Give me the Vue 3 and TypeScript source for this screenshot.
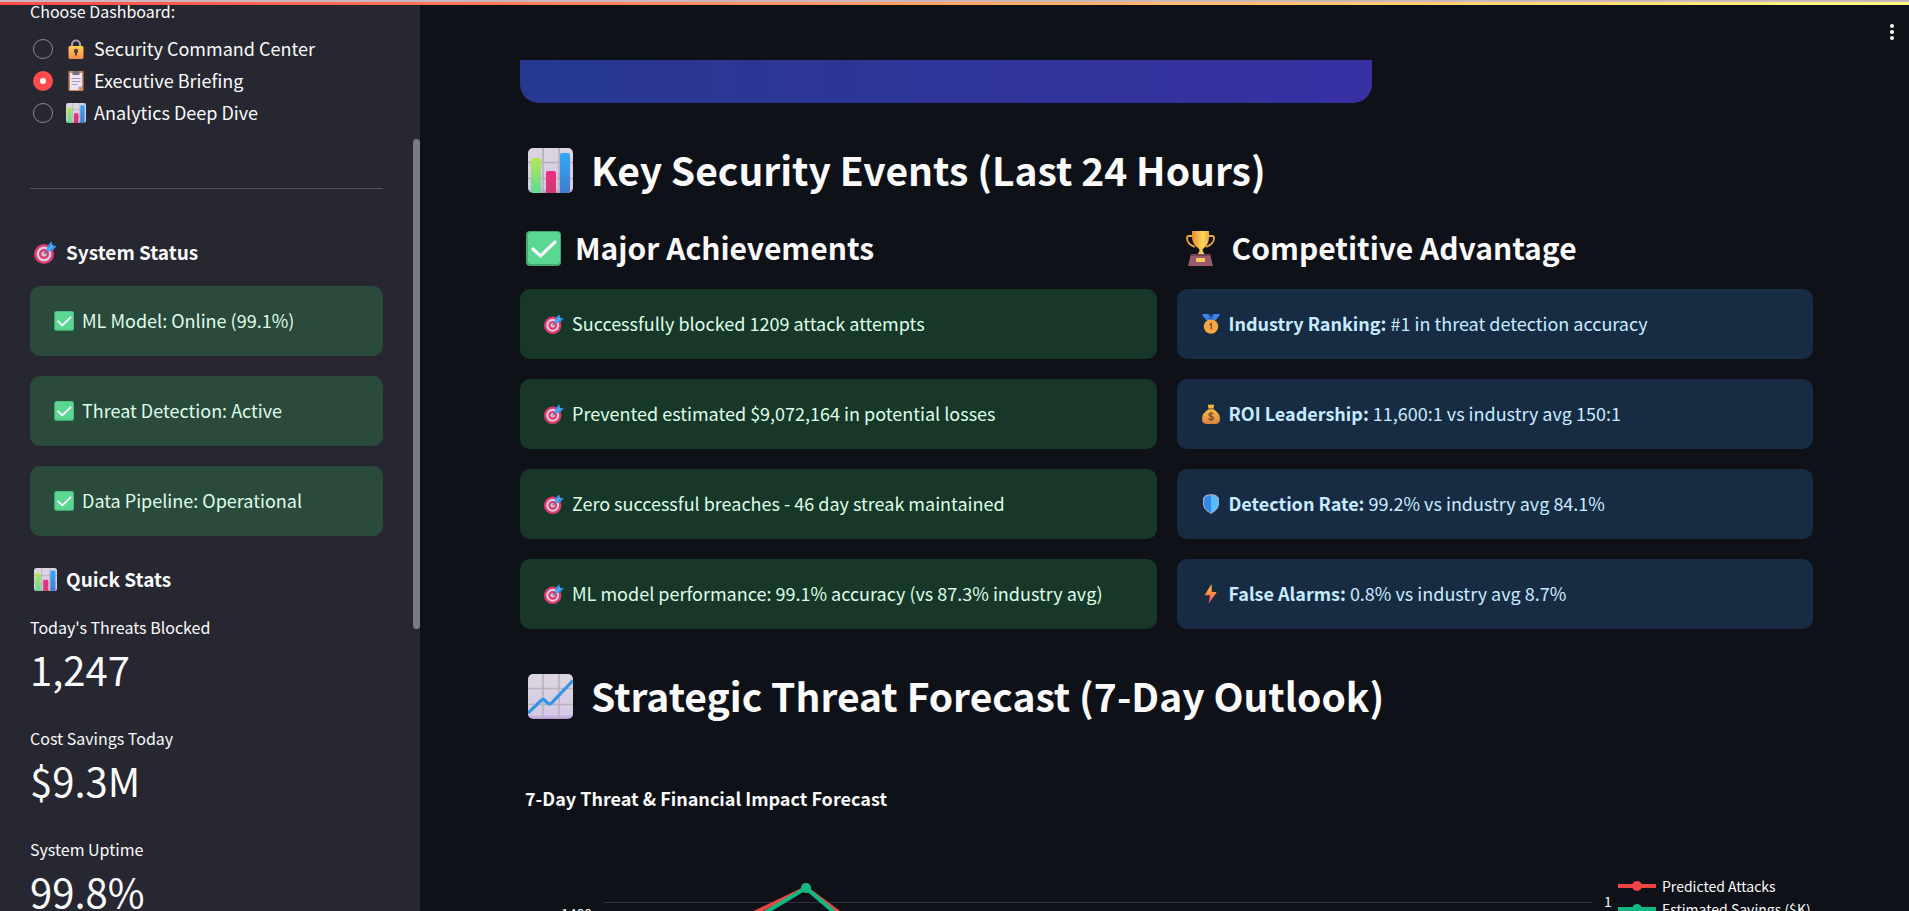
<script setup lang="ts">
import { ref } from 'vue'

interface Option { id: string; icon: string; label: string }
interface Advantage { icon: string; title: string; text: string }
interface Metric { label: string; value: string }
interface Series { name: string; color: string; points: [number, number][] }

const options: Option[] = [
  { id: 'security', icon: 'lock', label: 'Security Command Center' },
  { id: 'executive', icon: 'clipboard', label: 'Executive Briefing' },
  { id: 'analytics', icon: 'bars', label: 'Analytics Deep Dive' },
]
const selected = ref('executive')

const statuses: string[] = ['ML Model: Online (99.1%)', 'Threat Detection: Active', 'Data Pipeline: Operational']

const metrics: Metric[] = [
  { label: "Today's Threats Blocked", value: '1,247' },
  { label: 'Cost Savings Today', value: '$9.3M' },
  { label: 'System Uptime', value: '99.8%' },
]

const achievements: string[] = [
  'Successfully blocked 1209 attack attempts',
  'Prevented estimated $9,072,164 in potential losses',
  'Zero successful breaches - 46 day streak maintained',
  'ML model performance: 99.1% accuracy (vs 87.3% industry avg)',
]

const advantages: Advantage[] = [
  { icon: 'medal', title: 'Industry Ranking:', text: '#1 in threat detection accuracy' },
  { icon: 'moneybag', title: 'ROI Leadership:', text: '11,600:1 vs industry avg 150:1' },
  { icon: 'shield', title: 'Detection Rate:', text: '99.2% vs industry avg 84.1%' },
  { icon: 'bolt', title: 'False Alarms:', text: '0.8% vs industry avg 8.7%' },
]

const series: Series[] = [
  { name: 'Predicted Attacks', color: '#ef4444', points: [[56, 87], [202, 17], [347, 125]] },
  { name: 'Estimated Savings ($K)', color: '#10b981', points: [[56, 105], [202, 17], [347, 141]] },
]
const path = (s: Series): string => s.points.map((p) => p.join(',')).join(' ')
</script>

<template>
  <div class="app">
    <svg class="sprite" width="0" height="0" aria-hidden="true">
      <defs>
        <linearGradient id="g-paper" x1="0" y1="0" x2="0" y2="1"><stop offset="0" stop-color="#dcd6e0" /><stop offset=".9" stop-color="#d6c9e6" /><stop offset="1" stop-color="#b497cf" /></linearGradient>
        <linearGradient id="g-lime" x1="0" y1="0" x2="0" y2="1"><stop offset="0" stop-color="#b5e654" /><stop offset="1" stop-color="#5edb93" /></linearGradient>
        <linearGradient id="g-pink" x1="0" y1="0" x2="0" y2="1"><stop offset="0" stop-color="#ef2f86" /><stop offset="1" stop-color="#cf3a70" /></linearGradient>
        <linearGradient id="g-blue" x1="0" y1="0" x2="0" y2="1"><stop offset="0" stop-color="#34aaf8" /><stop offset="1" stop-color="#407bd0" /></linearGradient>
        <linearGradient id="g-lock" x1="0" y1="0" x2="0" y2="1"><stop offset="0" stop-color="#ffd055" /><stop offset="1" stop-color="#fb8a49" /></linearGradient>
        <linearGradient id="g-gold" x1="0" y1="0" x2="1" y2="0"><stop offset="0" stop-color="#e88a33" /><stop offset=".65" stop-color="#fbd95a" /><stop offset="1" stop-color="#f0a83c" /></linearGradient>
        <linearGradient id="g-bag" x1="0" y1="0" x2="0" y2="1"><stop offset="0" stop-color="#f6bd45" /><stop offset="1" stop-color="#dc8340" /></linearGradient>
        <linearGradient id="g-bolt" x1="0" y1="0" x2="0" y2="1"><stop offset="0" stop-color="#ffc24c" /><stop offset=".5" stop-color="#ff8a48" /><stop offset="1" stop-color="#f2355d" /></linearGradient>
      </defs>
      <symbol id="i-bars" viewBox="0 0 45 45">
        <rect width="45" height="45" rx="5" fill="url(#g-paper)" />
        <path d="M15 0v45M31 0v45M0 14.500h45M0 30.500h45" stroke="#b5aebb" stroke-width="1.600" />
        <path d="M3 12q0-2 2-2h6q2 0 2 2v33H5q-2-1-2-3z" fill="url(#g-lime)" />
        <path d="M18 25q0-2 2-2h6q2 0 2 2v20H18z" fill="url(#g-pink)" />
        <path d="M32 7q0-2 2-2h6q2 0 2 2v36l-2 2h-8z" fill="url(#g-blue)" />
      </symbol>
      <symbol id="i-trend" viewBox="0 0 45 45">
        <rect width="45" height="45" rx="5" fill="url(#g-paper)" />
        <path d="M15 0v45M31 0v45M0 14.500h45M0 30.500h45" stroke="#b9b2bf" stroke-width="1.600" />
        <path d="M0 39 13.500 26q1.500-1 3 0l3.500 3.500q1.500 1 3 0L45 6.500" fill="none" stroke="#3494df" stroke-width="3.200" />
      </symbol>
      <symbol id="i-check" viewBox="0 0 35 35">
        <rect width="35" height="35" rx="4" fill="#43a871" />
        <rect x="2" y="1" width="32" height="32" rx="3" fill="#5ad892" />
        <path d="m7 18 7.500 7L29 11" fill="none" stroke="#fbf4ff" stroke-width="3.200" stroke-linecap="round" stroke-linejoin="round" />
      </symbol>
      <symbol id="i-target" viewBox="0 0 23 23">
        <circle cx="10" cy="13" r="10" fill="#df3a6e" />
        <circle cx="10" cy="13" r="7.400" fill="#dccbe2" />
        <circle cx="10" cy="13" r="5" fill="#df3a6e" />
        <circle cx="10" cy="13" r="2.600" fill="#d9c3da" />
        <path d="m10.500 12.500 6-6" stroke="#58637d" stroke-width="1.500" stroke-linecap="round" />
        <path d="m12.500 9.500 1-4.500L17.500.300l1 4 4.200 1-4.200 4-4 1.200z" fill="#3499ec" />
        <path d="m13.500 9.500 5-5" stroke="#7cc8ff" stroke-width="1" />
      </symbol>
      <symbol id="i-lock" viewBox="0 0 20 20">
        <path d="M6 8V5.500a4 4 0 0 1 8 0V8" fill="none" stroke="#a29da8" stroke-width="2.200" />
        <rect x="2.500" y="7" width="15" height="13" rx="1.500" fill="url(#g-lock)" />
        <circle cx="10" cy="12" r="2.200" fill="#543f3c" />
        <path d="M9 12h2v4.500H9z" fill="#543f3c" />
      </symbol>
      <symbol id="i-clipboard" viewBox="0 0 20 20">
        <rect x="2.500" width="15" height="20" rx="1.200" fill="#cf8a5e" />
        <path d="M4 2h12v13l-4 4H4z" fill="#eee4f5" />
        <path d="m12 19 .5-3.500L16 15z" fill="#bda8cf" />
        <path d="M6.500 1q.5-1 1.500-1h4q1 0 1.500 1v3h-7z" fill="#77707f" />
        <path d="M5.500 7.500h9M5.500 10.500h9M5.500 13.500h6" stroke="#a99bb3" stroke-width="1" />
      </symbol>
      <symbol id="i-trophy" viewBox="0 0 35 35">
        <path d="M9 5H6Q4 5 4 7q0 6 8 9M26 5h3q2 0 2 2 0 6-8 9" fill="none" stroke="#f0a840" stroke-width="1.800" />
        <path d="M9 0h17v6q0 7-4.500 10.500-2.500 1.500-2 3.500l2.500 4h-8l2.500-4q.5-2-2-3.500Q9 13 9 6z" fill="url(#g-gold)" />
        <path d="M8 23h19l3 12H5z" fill="#9b596c" />
        <path d="M8 23h19l1 2H7.500z" fill="#704352" />
        <rect x="13" y="27" width="9" height="4" rx=".8" fill="#f8c85a" />
      </symbol>
      <symbol id="i-medal" viewBox="0 0 20 20">
        <path d="M1.500 0h6L10 2.500 12.500 0h6v1.500l-5 6h-7l-5-6z" fill="#3d83eb" />
        <path d="M7.500 0 10 2.500 12.500 0l-1 7h-3z" fill="#2868bd" />
        <circle cx="10" cy="12.600" r="7.200" fill="#f5a63f" />
        <path d="m8.600 10.800 1.700-1.200v6" fill="none" stroke="#7c4a32" stroke-width="1.300" />
      </symbol>
      <symbol id="i-moneybag" viewBox="0 0 20 20">
        <path d="M7 .500 9 1l1-1 1 1 2-.500v2L12.200 5H7.800L7 2.500z" fill="#efb344" />
        <path d="M8 5h4q7 4 7 10 0 5-5 5H6q-5 0-5-5Q1 9 8 5z" fill="url(#g-bag)" />
        <path d="M7.700 4.800h4.600" stroke="#8f5534" stroke-width="1.200" />
        <path d="M12.300 10.200q-.8-1.200-2.300-1.200-2.200 0-2.200 1.600 0 1.500 2.200 1.700 2.300.3 2.300 1.900T10 15.800q-1.700 0-2.500-1.300M10 7.800v9.200" fill="none" stroke="#784b32" stroke-width="1.200" />
      </symbol>
      <symbol id="i-shield" viewBox="0 0 20 20">
        <path d="M10 0 15 1l3 3v7q-1 5-8 9-7-4-8-9V4l3-3z" fill="#a8a9c6" />
        <path d="M10 1.200 6 2 3 4.500V11q1 4.500 7 7.900z" fill="#3388e8" />
        <path d="m10 1.200 4 .8 3 2.500V11q-1 4.500-7 7.900z" fill="#55bdfb" />
      </symbol>
      <symbol id="i-bolt" viewBox="0 0 20 20">
        <path d="M10.500 0 4 10.500q-.3.800.5.800H9L7.500 20l7.800-11q.4-.9-.5-.9h-4z" fill="url(#g-bolt)" />
      </symbol>
    </svg>

    <div class="decoration"></div>

    <aside class="sidebar">
      <fieldset class="picker">
        <legend>Choose Dashboard:</legend>
        <label v-for="o in options" :key="o.id" class="option">
          <input v-model="selected" type="radio" name="dashboard" :value="o.id" />
          <svg class="ico"><use :href="'#i-' + o.icon" /></svg>
          <span class="text">{{ o.label }}</span>
        </label>
      </fieldset>
      <hr />
      <h3 class="side-title"><svg class="ico-side"><use href="#i-target" /></svg>System Status</h3>
      <div class="stack">
        <div v-for="s in statuses" :key="s" class="card ok"><svg class="ico"><use href="#i-check" /></svg><span class="text">{{ s }}</span></div>
      </div>
      <h3 class="side-title stats-title"><svg class="ico-side"><use href="#i-bars" /></svg>Quick Stats</h3>
      <dl class="metrics">
        <div v-for="m in metrics" :key="m.label" class="metric">
          <dt>{{ m.label }}</dt>
          <dd>{{ m.value }}</dd>
        </div>
      </dl>
      <div class="thumb"></div>
    </aside>

    <main class="main">
      <button class="menu" type="button" aria-label="Main menu">
        <svg width="24" height="24" viewBox="0 0 24 24" fill="#fafafa"><circle cx="12" cy="6" r="2" /><circle cx="12" cy="12" r="2" /><circle cx="12" cy="18" r="2" /></svg>
      </button>
      <div class="hero-row"><div class="hero"></div></div>

      <h2><svg class="ico-h2"><use href="#i-bars" /></svg><span>Key Security Events (Last 24 Hours)</span></h2>
      <div class="columns">
        <section>
          <h3><svg class="ico-h3"><use href="#i-check" /></svg><span>Major Achievements</span></h3>
          <div class="stack">
            <div v-for="a in achievements" :key="a" class="card ok"><svg class="ico"><use href="#i-target" /></svg><span class="text">{{ a }}</span></div>
          </div>
        </section>
        <section>
          <h3><svg class="ico-h3"><use href="#i-trophy" /></svg><span>Competitive Advantage</span></h3>
          <div class="stack">
            <div v-for="a in advantages" :key="a.title" class="card info"><svg class="ico"><use :href="'#i-' + a.icon" /></svg><span class="text"><strong>{{ a.title }}</strong> {{ a.text }}</span></div>
          </div>
        </section>
      </div>

      <h2><svg class="ico-h2"><use href="#i-trend" /></svg><span>Strategic Threat Forecast (7-Day Outlook)</span></h2>
      <h4>7-Day Threat &amp; Financial Impact Forecast</h4>
      <div class="chart">
        <div class="tick left">1400</div>
        <svg class="plot" viewBox="0 0 988 400">
          <path d="M0 31.500h988" stroke="#31343e" stroke-width="1" />
          <g v-for="s in series" :key="s.name">
            <polyline :points="path(s)" fill="none" :stroke="s.color" stroke-width="4" />
            <circle v-for="p in s.points" :key="p[0]" :cx="p[0]" :cy="p[1]" r="5" :fill="s.color" />
          </g>
        </svg>
        <div class="tick right">1</div>
        <ul class="legend">
          <li v-for="s in series" :key="s.name">
            <svg width="38" height="12" viewBox="0 0 38 12"><path d="M0 6h38" :stroke="s.color" stroke-width="4" /><circle cx="19" cy="6" r="5" :fill="s.color" /></svg>
            <span>{{ s.name }}</span>
          </li>
        </ul>
      </div>
    </main>
  </div>
</template>

<style>
body {
  margin: 0;
  overflow: hidden;
  background: #0e1117;
}
</style>

<style scoped>
.app {
  display: flex;
  height: 100vh;
  overflow: hidden;
  background: #0e1117;
  color: #fafafa;
  font-family: "Noto Sans CJK SC", "Noto Sans", sans-serif;
  font-size: 18px;
  line-height: 28px;
}
.sprite {
  position: absolute;
}
.decoration {
  position: absolute;
  z-index: 2;
  top: 0;
  left: 0;
  right: 0;
  height: 3px;
  border-top: 2px solid #cbb6be;
  background: linear-gradient(90deg, #ff4b4b, #fffd80);
}
svg {
  flex: none;
}
.text {
  padding-bottom: 2px;
}
.ico {
  width: 20px;
  height: 20px;
}
h2, h3, h4 {
  display: flex;
  align-items: center;
  margin: 0;
  font-weight: 600;
}

.sidebar {
  position: relative;
  flex: none;
  box-sizing: border-box;
  width: 420px;
  padding: 0 37px 0 30px;
  overflow: hidden;
  background: #262730;
}
.picker {
  margin: 0;
  padding: 0;
  border: 0;
}
legend {
  padding: 0 0 11px;
  font-size: 16px;
  line-height: 22px;
}
.option {
  display: flex;
  align-items: center;
  height: 32px;
  padding-left: 3px;
}
.option .ico {
  margin: 0 8px 0 13px;
}
.option input {
  appearance: none;
  box-sizing: border-box;
  width: 20px;
  height: 20px;
  margin: 0;
  border: 1px solid #898a90;
  border-radius: 50%;
}
.option input:checked {
  border: 7px solid #ff4b4b;
  background: #fff;
}
hr {
  height: 1px;
  margin: 59px 0 49px;
  border: 0;
  background: #50515a;
}
.side-title {
  gap: 9px;
  padding-left: 4px;
  margin-bottom: 20px;
  font-size: 19px;
  line-height: 28px;
}
.ico-side {
  width: 23px;
  height: 23px;
}
.stats-title {
  margin: 29px 0 23px;
}
.metrics {
  display: grid;
  gap: 23px;
  margin: 0;
}
dt {
  padding-bottom: 2px;
  font-size: 16px;
  line-height: 22px;
}
dd {
  margin: 0;
  padding-bottom: 6px;
  font-size: 40px;
  line-height: 58px;
}
.thumb {
  position: absolute;
  top: 139px;
  right: 0;
  width: 7px;
  height: 490px;
  border-radius: 4px;
  background: #7d7b81;
}

.stack {
  display: grid;
  gap: 20px;
}
.card {
  display: flex;
  align-items: center;
  gap: 8px;
  padding: 20px 20px 20px 24px;
  border-radius: 10px;
}
.ok {
  background: rgba(61, 213, 109, 0.2);
  color: #dffde9;
}
.info {
  background: rgba(61, 157, 243, 0.2);
  color: #c7ebff;
}

.main {
  position: relative;
  flex: 1;
  min-width: 0;
  padding: 60px 96px 0 100px;
  overflow: hidden;
}
.menu {
  position: absolute;
  top: 20px;
  right: 5px;
  display: flex;
  padding: 0;
  border: 0;
  background: none;
}
.hero-row {
  display: grid;
  grid-template-columns: 2fr 1fr;
  gap: 15px;
}
.hero {
  height: 43px;
  border-radius: 0 0 19px 19px;
  background: linear-gradient(90deg, #26398f, #3730a3);
}
h2 {
  gap: 18px;
  margin-top: 40px;
  padding-left: 8px;
  font-size: 39px;
  line-height: 52px;
}
h2 span {
  padding-bottom: 2px;
}
.ico-h2 {
  width: 45px;
  height: 45px;
}
.columns {
  display: grid;
  grid-template-columns: 1fr 1fr;
  gap: 20px;
  margin-top: 30px;
}
.columns h3 {
  gap: 14px;
  margin-bottom: 20px;
  padding-left: 6px;
  font-size: 30px;
  line-height: 40px;
}
h3 span {
  padding-bottom: 2px;
}
.ico-h3 {
  width: 35px;
  height: 35px;
}
h4 {
  margin-top: 64px;
  padding: 0 0 2px 5px;
  font-size: 18px;
  font-weight: 700;
  line-height: 22px;
}
.chart {
  display: grid;
  grid-template-columns: 72px 12px 1fr 12px 14px 195px;
  margin-top: 60px;
  font-size: 14px;
  line-height: 20px;
}
.plot {
  grid-column: 3;
  width: 100%;
}
.tick {
  padding-top: 32px;
}
.left {
  text-align: right;
}
.right {
  grid-column: 5;
  padding-top: 20px;
}
.legend {
  margin: 3px 0 0;
  padding: 0;
  list-style: none;
}
.legend li {
  display: flex;
  align-items: center;
  gap: 6px;
  height: 23px;
  white-space: nowrap;
}
</style>
